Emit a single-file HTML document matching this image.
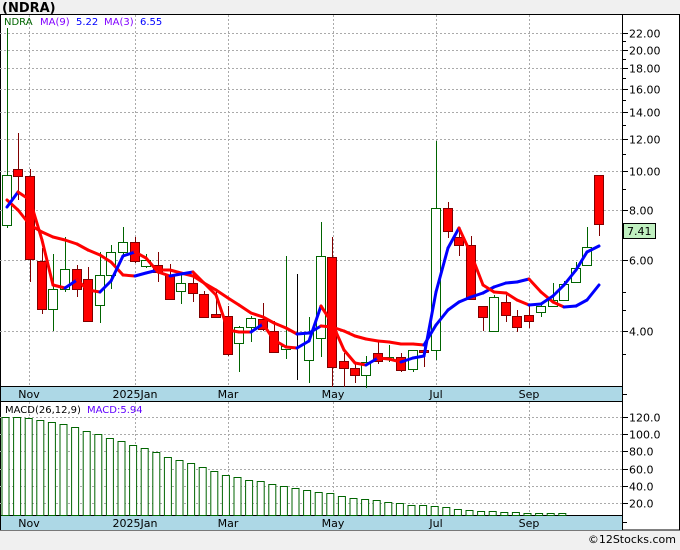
<!DOCTYPE html><html><head><meta charset="utf-8"><style>
body{margin:0;background:#f0f0f0;width:680px;height:546px;overflow:hidden;font-family:"DejaVu Sans","Liberation Sans",sans-serif}
svg text{font-family:"DejaVu Sans","Liberation Sans",sans-serif}
</style></head><body>
<svg id="s" width="680" height="546" xmlns="http://www.w3.org/2000/svg">
<rect x="0" y="0" width="680" height="546" fill="#f0f0f0"/>
<text x="2" y="12" font-size="13" font-weight="bold" fill="#000">(NDRA)</text>
<rect x="0.5" y="14.5" width="679" height="515.5" fill="#fff" stroke="#000"/>
<rect x="1" y="386" width="621" height="16" fill="#add8e6"/>
<rect x="1" y="515" width="621" height="15" fill="#add8e6"/>
<line x1="0" y1="386.5" x2="622" y2="386.5" stroke="#000"/>
<line x1="0" y1="401.5" x2="622" y2="401.5" stroke="#000"/>
<line x1="0" y1="515.5" x2="622" y2="515.5" stroke="#000"/>
<line x1="622.5" y1="14" x2="622.5" y2="530" stroke="#000"/>
<g id="g"></g>
<text x="4" y="25" font-size="10" fill="#006400">NDRA</text>
<text x="40" y="25" font-size="10" fill="#8000ff">MA(9)</text>
<text x="76" y="25" font-size="10" fill="#0000ff">5.22</text>
<text x="104" y="25" font-size="10" fill="#8000ff">MA(3)</text>
<text x="140" y="25" font-size="10" fill="#0000ff">6.55</text>
<text x="5" y="413" font-size="10" fill="#000">MACD(26,12,9)</text>
<text x="87" y="413" font-size="10" fill="#6000ff">MACD:5.94</text>
<text x="676" y="543" font-size="11" fill="#000" text-anchor="end">©12Stocks.com</text>
</svg>
<script>
var g=document.getElementById('g'),h='';
function L(x1,y1,x2,y2,c,w,d){h+='<line x1="'+x1+'" y1="'+y1+'" x2="'+x2+'" y2="'+y2+'" stroke="'+c+'" stroke-width="'+(w||1)+'"'+(d?' stroke-dasharray="'+d+'"':'')+'/>';}
function T(x,y,t,a){h+='<text x="'+x+'" y="'+y+'" font-size="11" fill="#000"'+(a?' text-anchor="middle"':'')+'>'+t+'</text>';}
var vx=[29,135,228,333,436,529];
vx.forEach(function(x){L(x+.5,15,x+.5,386,'#aaa',1,'2,2');L(x+.5,402,x+.5,515,'#aaa',1,'2,2');});
function py(p){return 331-174.6*Math.log(p/4);}
[22,20,18,16,14,12,10,8,6,4].forEach(function(p){var y=Math.round(py(p))+.5;L(0,y,622,y,'#aaa',1,'2,2');L(622,y,628,y,'#000');T(629,y+4,p.toFixed(2));});
[21,19,17,15,13,11,9,7,5,4.5,3.5].forEach(function(p){var y=Math.round(py(p))+.5;L(622,y,626,y,'#000');});
[120,100,80,60,40,20].forEach(function(v){var y=Math.round(520-0.857*v)+.5;L(0,y,622,y,'#aaa',1,'2,2');L(622,y,628,y,'#000');T(629,y+4,v.toFixed(1));});
[['Nov',29],['2025Jan',135],['Mar',228],['May',333],['Jul',436],['Sep',529]].forEach(function(a){T(a[1],398,a[0],1);T(a[1],527,a[0],1);});
L(622,394.5,627,394.5,'#000');L(622,522.5,627,522.5,'#000');
// candles: x, bodyTop, bodyBot, wickTop, wickBot, up?
var C=[[7,175,225,28,228,1],[18,169,176,133,200,0],[30,176,259,169,282,0],[42,261,309,248,314,0],[53,289,309,254,331,1],[65,269,289,237,292,1],[77,269,289,265,297,0],[88,279,321,267,322,0],[100,275,305,252,323,1],[111,252,275,245,289,1],[123,242,252,227,255,1],[135,242,261,237,263,0],[146,260,266,254,268,1],[158,265,272,252,282,0],[170,275,299,264,300,0],[181,283,291,275,304,1],[193,283,293,274,302,0],[204,294,317,291,318,0],[216,314,317,290,318,0],[228,316,354,306,356,0],[239,327,343,326,372,1],[251,318,327,316,342,1],[263,319,329,303,331,0],[274,331,352,321,353,0],[286,346,349,256,359,1],[297,347,348,274,380,2],[309,332,360,317,383,1],[321,256,338,222,357,1],[332,257,367,237,387,0],[344,361,368,353,387,0],[355,368,375,363,383,0],[366,362,375,356,388,1],[378,353,361,340,364,0],[389,357,359,345,362,1],[401,357,370,353,372,0],[413,350,369,350,372,1],[424,350,352,347,367,0],[436,208,350,141,360,1],[448,208,231,202,238,0],[459,237,245,227,256,0],[471,245,299,236,299,0],[483,306,317,306,331,0],[494,297,331,295,331,1],[506,302,315,295,322,0],[517,316,327,310,332,0],[529,315,321,304,328,0],[541,306,312,305,317,1],[553,300,306,283,307,1],[564,284,300,281,301,1],[576,268,282,262,283,1],[587,247,265,227,266,1],[599,175,224,175,236,0]];
C.forEach(function(c){var x=c[0],col=c[5]==1?'#006400':(c[5]==2?'#000':'#800000');L(x+.5,c[3],x+.5,c[4],col);
var bh=Math.max(1,c[2]-c[1]);
if(c[5]==1)h+='<rect x="'+(x-4.5)+'" y="'+(c[1]+.5)+'" width="9" height="'+bh+'" fill="#fff" stroke="#006400"/>';
else if(c[5]==0)h+='<rect x="'+(x-4.5)+'" y="'+(c[1]+.5)+'" width="9" height="'+bh+'" fill="#f00" stroke="#800000"/>';});
function line(P){for(var i=1;i<P.length;i++){var c=P[i][1]<P[i-1][1]?'#0000ff':'#ff0000';h+='<line x1="'+P[i-1][0]+'" y1="'+P[i-1][1]+'" x2="'+P[i][0]+'" y2="'+P[i][1]+'" stroke="'+c+'" stroke-width="3" stroke-linecap="round"/>';}}
var xs=C.map(function(c){return c[0];});
var m3=[207,192,200,240,285,288,280,290,292,281,256,252,258,272,276,274,272,283,295,330,332,332,324,340,347,348,341,306,323,350,363,365,358,359,362,358,356,292,248,228,254,285,292,293,300,305,304,296,285,270,252,246];
var m9=[200,210,225,232,237,240,244,250,255,262,275,276,273,270,270,273,276,283,290,298,305,313,317,323,328,334,333,326,327,331,336,339,341,342,344,344,345,325,310,302,297,293,287,283,282,279,292,302,307,306,300,285];
line(m9.map(function(y,i){return [xs[i],y];}));
line(m3.map(function(y,i){return [xs[i],y];}));
var mv=[120,120,119,117,114,112,108,104,100,96,92,88,84,79,74,70,66,62,57,53,50,47,45,42,40,37,35,33,31,28,26,25,23,21,20,18,17,16,15,13,12,11,10,9,9,8,7,6,5];
mv.forEach(function(v,i){var x=5+i*11.6,t=Math.round(520-0.857*v);if(t>513)t=513;h+='<rect x="'+(x-3).toFixed(1)+'" y="'+(t+.5)+'" width="7" height="'+(515-t)+'" fill="#fff" stroke="#006400"/>';});
h+='<rect x="623.5" y="223.5" width="32" height="15" fill="#c0f0c0" stroke="#000"/>';
h+='<text x="627" y="235" font-size="11" fill="#000">7.41</text>';
g.innerHTML=h;
</script>
</body></html>
